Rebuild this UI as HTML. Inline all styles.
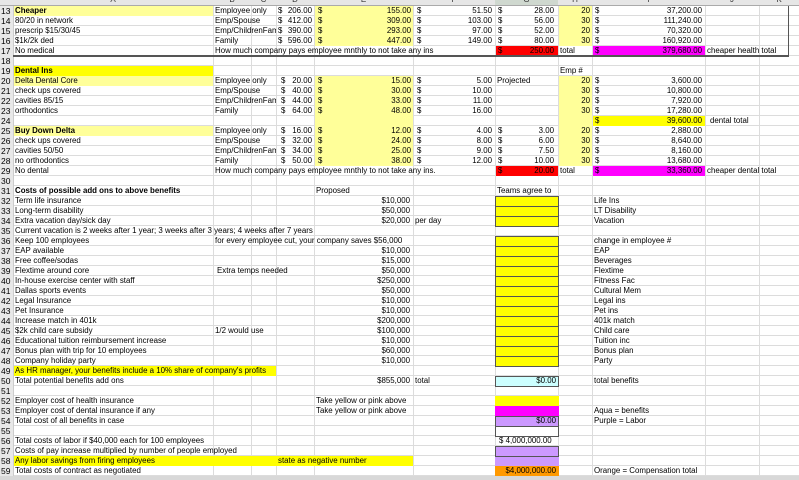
<!DOCTYPE html>
<html><head><meta charset="utf-8"><style>
*{margin:0;padding:0;box-sizing:border-box}
body{width:799px;height:480px;overflow:hidden;background:#fff;position:relative;font-family:"Liberation Sans",Arial,sans-serif;font-size:7.9px;color:#000}
div{position:absolute;white-space:nowrap;line-height:10px;height:10px}
.f{z-index:0}
.t{z-index:2}
.r{z-index:2;text-align:right}
.b{font-weight:bold}
.h{z-index:3;background:#e6e6e6;color:#333;text-align:center;font-size:8px}
.bx{border:1px solid #555;z-index:1}
</style></head><body>
<div style="left:0;top:6px;width:799px;height:470px;background:repeating-linear-gradient(to bottom,transparent 0,transparent 9px,#dcdcdc 9px,#dcdcdc 10px);z-index:0"></div>
<div style="left:13px;top:0;width:1px;height:476px;background:#ccc"></div>
<div style="left:213px;top:0;width:1px;height:476px;background:#dcdcdc"></div>
<div style="left:251px;top:0;width:1px;height:476px;background:#dcdcdc"></div>
<div style="left:276px;top:0;width:1px;height:476px;background:#dcdcdc"></div>
<div style="left:314px;top:0;width:1px;height:476px;background:#dcdcdc"></div>
<div style="left:413px;top:0;width:1px;height:476px;background:#dcdcdc"></div>
<div style="left:495px;top:0;width:1px;height:476px;background:#dcdcdc"></div>
<div style="left:558px;top:0;width:1px;height:476px;background:#dcdcdc"></div>
<div style="left:592px;top:0;width:1px;height:476px;background:#dcdcdc"></div>
<div style="left:705px;top:0;width:1px;height:476px;background:#dcdcdc"></div>
<div style="left:759px;top:0;width:1px;height:476px;background:#dcdcdc"></div>
<div class="h" style="left:0;top:0;width:799px;height:6px;border-bottom:1px solid #aaa"></div>
<div class="h" style="left:13px;top:-5px;width:200px">A</div>
<div class="h" style="left:213px;top:-5px;width:38px">B</div>
<div class="h" style="left:251px;top:-5px;width:25px">C</div>
<div class="h" style="left:276px;top:-5px;width:38px">D</div>
<div class="h" style="left:314px;top:-5px;width:99px">E</div>
<div class="h" style="left:413px;top:-5px;width:82px">F</div>
<div class="h" style="left:495px;top:-5px;width:63px;background:#cfd8cf">G</div>
<div class="h" style="left:558px;top:-5px;width:34px">H</div>
<div class="h" style="left:592px;top:-5px;width:113px">I</div>
<div class="h" style="left:705px;top:-5px;width:54px">J</div>
<div class="h" style="left:759px;top:-5px;width:40px">K</div>
<div style="left:0;top:6px;width:13px;height:470px;background:#e8e8e8;z-index:1"></div>
<div class="t" style="left:1px;top:6px;font-size:8.5px;line-height:10px;height:470px;white-space:normal;width:12px">13 14 15 16 17 18 19 20 21 22 23 24 25 26 27 28 29 30 31 32 33 34 35 36 37 38 39 40 41 42 43 44 45 46 47 48 49 50 51 52 53 54 55 56 57 58 59</div>
<div class="f" style="left:14px;top:6px;width:199px;background:#ffff99"></div>
<div class="f" style="left:315px;top:6px;width:98px;height:40px;background:#ffff99"></div>
<div class="f" style="left:559px;top:6px;width:33px;height:40px;background:#ffff99"></div>
<div class="f" style="left:496px;top:46px;width:62px;background:#ff0000"></div>
<div class="f" style="left:593px;top:46px;width:112px;background:#ff00ff"></div>
<div style="left:13px;top:55px;width:776px;height:2px;background:#555;z-index:3"></div>
<div style="left:788px;top:6px;width:1px;height:51px;background:#555;z-index:3"></div>
<div class="f" style="left:14px;top:66px;width:199px;background:#ffff00"></div>
<div class="f" style="left:14px;top:76px;width:199px;background:#ffff99"></div>
<div class="f" style="left:315px;top:76px;width:98px;height:90px;background:#ffff99"></div>
<div class="f" style="left:559px;top:76px;width:33px;height:90px;background:#ffff99"></div>
<div class="f" style="left:593px;top:116px;width:112px;background:#ffff00"></div>
<div class="f" style="left:14px;top:126px;width:199px;background:#ffff99"></div>
<div class="f" style="left:496px;top:166px;width:62px;background:#ff0000"></div>
<div class="f" style="left:593px;top:166px;width:112px;background:#ff00ff"></div>
<div class="bx" style="left:495px;top:196px;width:64px;height:31px;background:#ffff00"></div>
<div class="f" style="left:495px;top:206px;width:64px;height:1px;background:#555;z-index:1"></div>
<div class="f" style="left:495px;top:216px;width:64px;height:1px;background:#555;z-index:1"></div>
<div class="bx" style="left:495px;top:236px;width:64px;height:131px;background:repeating-linear-gradient(to bottom,#ffff00 0,#ffff00 9px,#555 9px,#555 10px)"></div>
<div class="f" style="left:14px;top:366px;width:262px;background:#ffff00"></div>
<div class="bx" style="left:495px;top:376px;width:64px;height:11px;background:#ccffff"></div>
<div class="f" style="left:495px;top:396px;width:64px;background:#ffff00"></div>
<div class="f" style="left:495px;top:406px;width:64px;background:#ff00ff"></div>
<div class="bx" style="left:495px;top:416px;width:64px;height:11px;background:#cc99ff"></div>
<div class="bx" style="left:495px;top:426px;width:64px;height:11px;background:#fff"></div>
<div class="bx" style="left:495px;top:446px;width:64px;height:11px;background:#cc99ff"></div>
<div class="f" style="left:14px;top:456px;width:399px;background:#ffff00"></div>
<div class="f" style="left:495px;top:456px;width:64px;background:#cc99ff"></div>
<div class="f" style="left:495px;top:466px;width:64px;background:#ff9900"></div>
<div style="left:0;top:476px;width:799px;height:4px;background:#d8d8d8;z-index:3"></div>

<div class="t b" style="left:15px;top:6px">Cheaper</div>
<div class="t" style="left:15px;top:16px">80/20 in network</div>
<div class="t" style="left:15px;top:26px">prescrip $15/30/45</div>
<div class="t" style="left:15px;top:36px">$1k/2k ded</div>
<div class="t" style="left:15px;top:46px">No medical</div>
<div class="t" style="left:215px;top:6px">Employee only</div>
<div class="t" style="left:215px;top:16px">Emp/Spouse</div>
<div class="t" style="left:215px;top:26px;width:61px;overflow:hidden">Emp/ChildrenFam</div>
<div class="t" style="left:215px;top:36px">Family</div>
<div class="t" style="left:215px;top:46px">How much company pays employee mnthly to not take any ins</div>
<div class="t" style="left:278px;top:6px">$</div><div class="r" style="left:276px;top:6px;width:36px">206.00</div>
<div class="t" style="left:278px;top:16px">$</div><div class="r" style="left:276px;top:16px;width:36px">412.00</div>
<div class="t" style="left:278px;top:26px">$</div><div class="r" style="left:276px;top:26px;width:36px">390.00</div>
<div class="t" style="left:278px;top:36px">$</div><div class="r" style="left:276px;top:36px;width:36px">596.00</div>
<div class="t" style="left:318px;top:6px">$</div><div class="r" style="left:314px;top:6px;width:97px">155.00</div>
<div class="t" style="left:318px;top:16px">$</div><div class="r" style="left:314px;top:16px;width:97px">309.00</div>
<div class="t" style="left:318px;top:26px">$</div><div class="r" style="left:314px;top:26px;width:97px">293.00</div>
<div class="t" style="left:318px;top:36px">$</div><div class="r" style="left:314px;top:36px;width:97px">447.00</div>
<div class="t" style="left:417px;top:6px">$</div><div class="r" style="left:413px;top:6px;width:79px">51.50</div>
<div class="t" style="left:417px;top:16px">$</div><div class="r" style="left:413px;top:16px;width:79px">103.00</div>
<div class="t" style="left:417px;top:26px">$</div><div class="r" style="left:413px;top:26px;width:79px">97.00</div>
<div class="t" style="left:417px;top:36px">$</div><div class="r" style="left:413px;top:36px;width:79px">149.00</div>
<div class="t" style="left:498px;top:6px">$</div><div class="r" style="left:495px;top:6px;width:59px">28.00</div>
<div class="t" style="left:498px;top:16px">$</div><div class="r" style="left:495px;top:16px;width:59px">56.00</div>
<div class="t" style="left:498px;top:26px">$</div><div class="r" style="left:495px;top:26px;width:59px">52.00</div>
<div class="t" style="left:498px;top:36px">$</div><div class="r" style="left:495px;top:36px;width:59px">80.00</div>
<div class="t" style="left:498px;top:46px">$</div><div class="r" style="left:495px;top:46px;width:59px">250.00</div>
<div class="r" style="left:558px;top:6px;width:32px">20</div>
<div class="r" style="left:558px;top:16px;width:32px">30</div>
<div class="r" style="left:558px;top:26px;width:32px">20</div>
<div class="r" style="left:558px;top:36px;width:32px">30</div>
<div class="t" style="left:560px;top:46px">total</div>
<div class="t" style="left:595px;top:6px">$</div><div class="r" style="left:592px;top:6px;width:110px">37,200.00</div>
<div class="t" style="left:595px;top:16px">$</div><div class="r" style="left:592px;top:16px;width:110px">111,240.00</div>
<div class="t" style="left:595px;top:26px">$</div><div class="r" style="left:592px;top:26px;width:110px">70,320.00</div>
<div class="t" style="left:595px;top:36px">$</div><div class="r" style="left:592px;top:36px;width:110px">160,920.00</div>
<div class="t" style="left:595px;top:46px">$</div><div class="r" style="left:592px;top:46px;width:110px">379,680.00</div>
<div class="t" style="left:707px;top:46px">cheaper health total</div>

<div class="t b" style="left:15px;top:66px">Dental Ins</div>
<div class="t" style="left:560px;top:66px">Emp #</div>
<div class="t" style="left:15px;top:76px">Delta Dental Core</div>
<div class="t" style="left:15px;top:86px">check ups covered</div>
<div class="t" style="left:15px;top:96px">cavities 85/15</div>
<div class="t" style="left:15px;top:106px">orthodontics</div>
<div class="t b" style="left:15px;top:126px">Buy Down Delta</div>
<div class="t" style="left:15px;top:136px">check ups covered</div>
<div class="t" style="left:15px;top:146px">cavities 50/50</div>
<div class="t" style="left:15px;top:156px">no orthodontics</div>
<div class="t" style="left:15px;top:166px">No dental</div>
<div class="t" style="left:215px;top:76px">Employee only</div>
<div class="t" style="left:215px;top:86px">Emp/Spouse</div>
<div class="t" style="left:215px;top:96px;width:61px;overflow:hidden">Emp/ChildrenFam</div>
<div class="t" style="left:215px;top:106px">Family</div>
<div class="t" style="left:215px;top:126px">Employee only</div>
<div class="t" style="left:215px;top:136px">Emp/Spouse</div>
<div class="t" style="left:215px;top:146px;width:61px;overflow:hidden">Emp/ChildrenFam</div>
<div class="t" style="left:215px;top:156px">Family</div>
<div class="t" style="left:215px;top:166px">How much company pays employee mnthly to not take any ins.</div>
<div class="t" style="left:281px;top:76px">$</div><div class="r" style="left:276px;top:76px;width:36px">20.00</div>
<div class="t" style="left:281px;top:86px">$</div><div class="r" style="left:276px;top:86px;width:36px">40.00</div>
<div class="t" style="left:281px;top:96px">$</div><div class="r" style="left:276px;top:96px;width:36px">44.00</div>
<div class="t" style="left:281px;top:106px">$</div><div class="r" style="left:276px;top:106px;width:36px">64.00</div>
<div class="t" style="left:281px;top:126px">$</div><div class="r" style="left:276px;top:126px;width:36px">16.00</div>
<div class="t" style="left:281px;top:136px">$</div><div class="r" style="left:276px;top:136px;width:36px">32.00</div>
<div class="t" style="left:281px;top:146px">$</div><div class="r" style="left:276px;top:146px;width:36px">34.00</div>
<div class="t" style="left:281px;top:156px">$</div><div class="r" style="left:276px;top:156px;width:36px">50.00</div>
<div class="t" style="left:318px;top:76px">$</div><div class="r" style="left:314px;top:76px;width:97px">15.00</div>
<div class="t" style="left:318px;top:86px">$</div><div class="r" style="left:314px;top:86px;width:97px">30.00</div>
<div class="t" style="left:318px;top:96px">$</div><div class="r" style="left:314px;top:96px;width:97px">33.00</div>
<div class="t" style="left:318px;top:106px">$</div><div class="r" style="left:314px;top:106px;width:97px">48.00</div>
<div class="t" style="left:318px;top:126px">$</div><div class="r" style="left:314px;top:126px;width:97px">12.00</div>
<div class="t" style="left:318px;top:136px">$</div><div class="r" style="left:314px;top:136px;width:97px">24.00</div>
<div class="t" style="left:318px;top:146px">$</div><div class="r" style="left:314px;top:146px;width:97px">25.00</div>
<div class="t" style="left:318px;top:156px">$</div><div class="r" style="left:314px;top:156px;width:97px">38.00</div>
<div class="t" style="left:417px;top:76px">$</div><div class="r" style="left:413px;top:76px;width:79px">5.00</div>
<div class="t" style="left:417px;top:86px">$</div><div class="r" style="left:413px;top:86px;width:79px">10.00</div>
<div class="t" style="left:417px;top:96px">$</div><div class="r" style="left:413px;top:96px;width:79px">11.00</div>
<div class="t" style="left:417px;top:106px">$</div><div class="r" style="left:413px;top:106px;width:79px">16.00</div>
<div class="t" style="left:417px;top:126px">$</div><div class="r" style="left:413px;top:126px;width:79px">4.00</div>
<div class="t" style="left:417px;top:136px">$</div><div class="r" style="left:413px;top:136px;width:79px">8.00</div>
<div class="t" style="left:417px;top:146px">$</div><div class="r" style="left:413px;top:146px;width:79px">9.00</div>
<div class="t" style="left:417px;top:156px">$</div><div class="r" style="left:413px;top:156px;width:79px">12.00</div>
<div class="t" style="left:497px;top:76px">Projected</div>
<div class="t" style="left:498px;top:126px">$</div><div class="r" style="left:495px;top:126px;width:59px">3.00</div>
<div class="t" style="left:498px;top:136px">$</div><div class="r" style="left:495px;top:136px;width:59px">6.00</div>
<div class="t" style="left:498px;top:146px">$</div><div class="r" style="left:495px;top:146px;width:59px">7.50</div>
<div class="t" style="left:498px;top:156px">$</div><div class="r" style="left:495px;top:156px;width:59px">10.00</div>
<div class="t" style="left:498px;top:166px">$</div><div class="r" style="left:495px;top:166px;width:59px">20.00</div>
<div class="t" style="left:560px;top:166px">total</div>
<div class="r" style="left:558px;top:76px;width:32px">20</div>
<div class="r" style="left:558px;top:86px;width:32px">30</div>
<div class="r" style="left:558px;top:96px;width:32px">20</div>
<div class="r" style="left:558px;top:106px;width:32px">30</div>
<div class="r" style="left:558px;top:126px;width:32px">20</div>
<div class="r" style="left:558px;top:136px;width:32px">30</div>
<div class="r" style="left:558px;top:146px;width:32px">20</div>
<div class="r" style="left:558px;top:156px;width:32px">30</div>
<div class="t" style="left:595px;top:76px">$</div><div class="r" style="left:592px;top:76px;width:110px">3,600.00</div>
<div class="t" style="left:595px;top:86px">$</div><div class="r" style="left:592px;top:86px;width:110px">10,800.00</div>
<div class="t" style="left:595px;top:96px">$</div><div class="r" style="left:592px;top:96px;width:110px">7,920.00</div>
<div class="t" style="left:595px;top:106px">$</div><div class="r" style="left:592px;top:106px;width:110px">17,280.00</div>
<div class="t" style="left:595px;top:116px">$</div><div class="r" style="left:592px;top:116px;width:110px">39,600.00</div>
<div class="t" style="left:710px;top:116px">dental total</div>
<div class="t" style="left:595px;top:126px">$</div><div class="r" style="left:592px;top:126px;width:110px">2,880.00</div>
<div class="t" style="left:595px;top:136px">$</div><div class="r" style="left:592px;top:136px;width:110px">8,640.00</div>
<div class="t" style="left:595px;top:146px">$</div><div class="r" style="left:592px;top:146px;width:110px">8,160.00</div>
<div class="t" style="left:595px;top:156px">$</div><div class="r" style="left:592px;top:156px;width:110px">13,680.00</div>
<div class="t" style="left:595px;top:166px">$</div><div class="r" style="left:592px;top:166px;width:110px">33,360.00</div>
<div class="t" style="left:707px;top:166px">cheaper dental total</div>

<div class="t b" style="left:15px;top:186px">Costs of possible add ons to above benefits</div>
<div class="t" style="left:316px;top:186px">Proposed</div>
<div class="t" style="left:497px;top:186px">Teams agree to</div>
<div class="t" style="left:15px;top:196px">Term life insurance</div>
<div class="t" style="left:15px;top:206px">Long-term disability</div>
<div class="t" style="left:15px;top:216px">Extra vacation day/sick day</div>
<div class="t" style="left:15px;top:226px">Current vacation is 2 weeks after 1 year; 3 weeks after 3 years; 4 weeks after 7 years</div>
<div class="t" style="left:15px;top:236px">Keep 100 employees</div>
<div class="t" style="left:215px;top:236px">for every employee cut, your company saves $56,000</div>
<div class="t" style="left:15px;top:246px">EAP available</div>
<div class="t" style="left:15px;top:256px">Free coffee/sodas</div>
<div class="t" style="left:15px;top:266px">Flextime around core</div>
<div class="t" style="left:217px;top:266px">Extra temps needed</div>
<div class="t" style="left:15px;top:276px">In-house exercise center with staff</div>
<div class="t" style="left:15px;top:286px">Dallas sports events</div>
<div class="t" style="left:15px;top:296px">Legal Insurance</div>
<div class="t" style="left:15px;top:306px">Pet Insurance</div>
<div class="t" style="left:15px;top:316px">Increase match in 401k</div>
<div class="t" style="left:15px;top:326px">$2k child care subsidy</div>
<div class="t" style="left:215px;top:326px">1/2 would use</div>
<div class="t" style="left:15px;top:336px">Educational tuition reimbursement increase</div>
<div class="t" style="left:15px;top:346px">Bonus plan with trip for 10 employees</div>
<div class="t" style="left:15px;top:356px">Company holiday party</div>
<div class="t" style="left:15px;top:366px">As HR manager, your benefits include a 10% share of company's profits</div>
<div class="t" style="left:15px;top:376px">Total potential benefits add ons</div>
<div class="r" style="left:314px;top:196px;width:96px">$10,000</div>
<div class="r" style="left:314px;top:206px;width:96px">$50,000</div>
<div class="r" style="left:314px;top:216px;width:96px">$20,000</div>
<div class="t" style="left:415px;top:216px">per day</div>
<div class="r" style="left:314px;top:246px;width:96px">$10,000</div>
<div class="r" style="left:314px;top:256px;width:96px">$15,000</div>
<div class="r" style="left:314px;top:266px;width:96px">$50,000</div>
<div class="r" style="left:314px;top:276px;width:96px">$250,000</div>
<div class="r" style="left:314px;top:286px;width:96px">$50,000</div>
<div class="r" style="left:314px;top:296px;width:96px">$10,000</div>
<div class="r" style="left:314px;top:306px;width:96px">$10,000</div>
<div class="r" style="left:314px;top:316px;width:96px">$200,000</div>
<div class="r" style="left:314px;top:326px;width:96px">$100,000</div>
<div class="r" style="left:314px;top:336px;width:96px">$10,000</div>
<div class="r" style="left:314px;top:346px;width:96px">$60,000</div>
<div class="r" style="left:314px;top:356px;width:96px">$10,000</div>
<div class="r" style="left:314px;top:376px;width:96px">$855,000</div>
<div class="t" style="left:415px;top:376px">total</div>
<div class="r" style="left:495px;top:376px;width:61px">$0.00</div>
<div class="t" style="left:594px;top:196px">Life Ins</div>
<div class="t" style="left:594px;top:206px">LT Disability</div>
<div class="t" style="left:594px;top:216px">Vacation</div>
<div class="t" style="left:594px;top:236px">change in employee #</div>
<div class="t" style="left:594px;top:246px">EAP</div>
<div class="t" style="left:594px;top:256px">Beverages</div>
<div class="t" style="left:594px;top:266px">Flextime</div>
<div class="t" style="left:594px;top:276px">Fitness Fac</div>
<div class="t" style="left:594px;top:286px">Cultural Mem</div>
<div class="t" style="left:594px;top:296px">Legal ins</div>
<div class="t" style="left:594px;top:306px">Pet ins</div>
<div class="t" style="left:594px;top:316px">401k match</div>
<div class="t" style="left:594px;top:326px">Child care</div>
<div class="t" style="left:594px;top:336px">Tuition inc</div>
<div class="t" style="left:594px;top:346px">Bonus plan</div>
<div class="t" style="left:594px;top:356px">Party</div>
<div class="t" style="left:594px;top:376px">total benefits</div>

<div class="t" style="left:15px;top:396px">Employer cost of health insurance</div>
<div class="t" style="left:15px;top:406px">Employer cost of dental insurance if any</div>
<div class="t" style="left:15px;top:416px">Total cost of all benefits in case</div>
<div class="t" style="left:15px;top:436px">Total costs of labor if $40,000 each for 100 employees</div>
<div class="t" style="left:15px;top:446px">Costs of pay increase multiplied by number of people employed</div>
<div class="t" style="left:15px;top:456px">Any labor savings from firing employees</div>
<div class="t" style="left:278px;top:456px">state as negative number</div>
<div class="t" style="left:15px;top:466px">Total costs of contract as negotiated</div>
<div class="t" style="left:316px;top:396px">Take yellow or pink above</div>
<div class="t" style="left:316px;top:406px">Take yellow or pink above</div>
<div class="r" style="left:495px;top:416px;width:61px">$0.00</div>
<div class="t" style="left:499px;top:436px">$ 4,000,000.00</div>
<div class="r" style="left:495px;top:466px;width:61px">$4,000,000.00</div>
<div class="t" style="left:594px;top:406px">Aqua = benefits</div>
<div class="t" style="left:594px;top:416px">Purple = Labor</div>
<div class="t" style="left:594px;top:466px">Orange = Compensation total</div>
</body></html>
